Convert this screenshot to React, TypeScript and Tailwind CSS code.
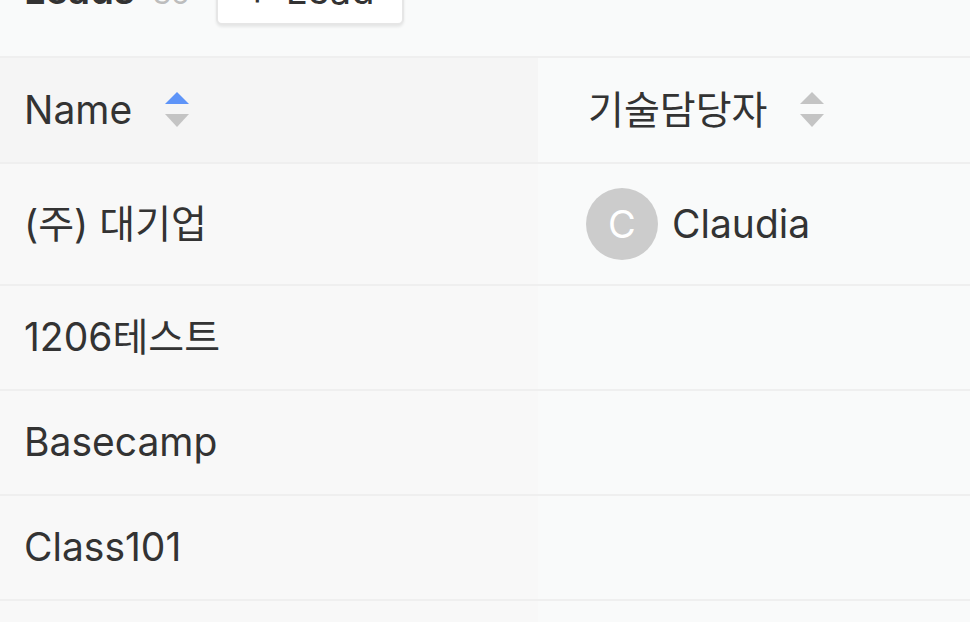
import React from "react";

type Row = { name: string; owner?: string };

const rows: Row[] = [
    { name: "(주) 대기업", owner: "Claudia" },
    { name: "1206테스트" },
    { name: "Basecamp" },
    { name: "Class101" },
    { name: "" },
];

function SortIcon({ active }: { active?: boolean }) {
    return (
        <svg width="26" height="38" viewBox="0 0 26 38" className="ml-[32px]">
            <path d="M1 13 L13 1 L25 13 Z" fill={active ? "#5e94f8" : "#c4c4c4"} />
            <path d="M1 23 L25 23 L13 36 Z" fill="#c4c4c4" />
        </svg>
    );
}

export default function App() {
    return (
        <div
            className="w-[970px] h-[622px] overflow-hidden bg-[#f9fafa] text-[#333333]"
            style={{ fontFamily: "Inter, 'Noto Sans CJK KR', sans-serif" }}
        >
            {/* toolbar, mostly scrolled out of view */}
            <div className="h-[58px] border-b-2 border-[#efefef] overflow-hidden">
                <div className="flex items-end gap-[26px] pl-[24px] -mt-[45px]">
                    <div className="flex items-baseline gap-[18px] pb-[16px]">
                        <span className="text-[38px] font-semibold leading-none">Leads</span>
                        <span className="text-[30px] text-[#bdbdbd] leading-none">35</span>
                    </div>
                    <button className="w-[188px] h-[70px] rounded-[6px] bg-white border-2 border-[#e6e6e6] shadow-[0_2px_3px_rgba(0,0,0,0.08)] flex items-end justify-center gap-[16px] pb-[14px] text-[38px] leading-none">
                        <span>+</span>
                        <span>Lead</span>
                    </button>
                </div>
            </div>

            <table className="w-full border-collapse text-[39px]">
                <thead>
                    <tr className="h-[105px] border-b-2 border-[#efefef]">
                        <th className="w-[538px] bg-[#f5f5f5] font-normal text-left pl-[24px]">
                            <div className="flex items-center">
                                <span>Name</span>
                                <SortIcon active />
                            </div>
                        </th>
                        <th className="bg-[#f9fafa] font-normal text-left">
                            <div className="flex items-center pl-[50px]">
                                <span>기술담당자</span>
                                <SortIcon />
                            </div>
                        </th>
                    </tr>
                </thead>
                <tbody>
                    {rows.map((r, i) => (
                        <tr
                            key={i}
                            className={`${i === 0 ? "h-[122px]" : "h-[105px]"} border-b-2 border-[#efefef]`}
                        >
                            <td className="bg-[#f8f8f8] pl-[24px]">{r.name}</td>
                            <td className="bg-[#f9fafa] pl-[48px]">
                                {r.owner && (
                                    <div className="flex items-center gap-[14px]">
                                        <div className="w-[72px] h-[72px] rounded-full bg-[#cccccc] text-white flex items-center justify-center text-[38px]">
                                            C
                                        </div>
                                        <span>{r.owner}</span>
                                    </div>
                                )}
                            </td>
                        </tr>
                    ))}
                </tbody>
            </table>
        </div>
    );
}
